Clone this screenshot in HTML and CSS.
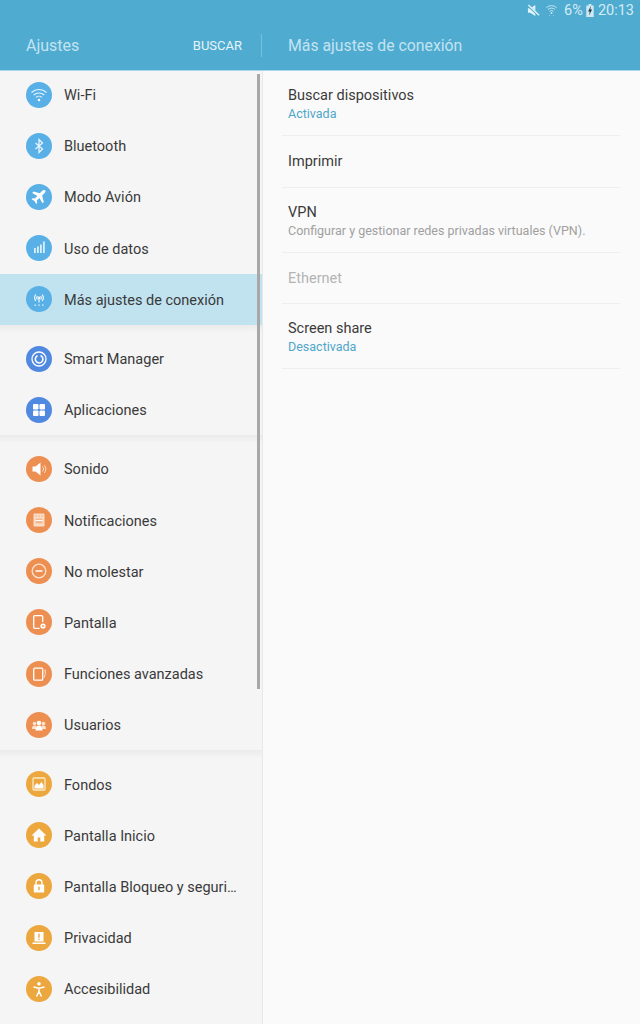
FILE: index.html
```html
<!DOCTYPE html>
<html>
<head>
    <title>Ajustes</title>
    <link rel="stylesheet" href="styles.css">
</head>
<body>
    <div class="screen">
        <header class="header">
            <div class="status-bar">
                <svg class="status-mute" viewBox="0 0 14 14"><path d="M1 4.500h2.500L9 1v12L3.500 9.500H1z" fill="#e4f3f9"/><path d="M1 1.500l12 11" stroke="#4fabd0" stroke-width="2.600"/><path d="M1.500 1l11.500 11" stroke="#e4f3f9" stroke-width="1.500"/></svg>
                <svg class="status-wifi" viewBox="0 0 14 14"><g fill="none" stroke="#cfe8f2" stroke-width="1"><path d="M1.500 4.500a8 8 0 0 1 11 0"/><path d="M3.200 6.500a5.500 5.500 0 0 1 7.600 0"/><path d="M5 8.400a3 3 0 0 1 4 0"/></g><circle cx="7" cy="10.200" r="1" fill="#cfe8f2"/><path d="M4.500 13h1M8.500 13h1" stroke="#9fd2e6" stroke-width="1"/></svg>
                <span class="status-text status-battery-pct">6%</span>
                <svg class="status-battery" viewBox="0 0 8 14"><path d="M2.500 0h3v1.500H8V14H0V1.500h2.500z" fill="#cfe8f2"/><path d="M5 2L2 8h1.800L3 12.500 6.200 6H4.300z" fill="#1d3a46"/></svg>
                <span class="status-text">20:13</span>
            </div>
            <div class="title-bar">
                <div class="title-left">
                    <span class="app-title">Ajustes</span>
                    <span class="search-btn">BUSCAR</span>
                </div>
                <div class="page-title">Más ajustes de conexión</div>
            </div>
        </header>

        <div class="panes">
            <nav class="sidebar">
                <div class="scrollbar"></div>

                <div class="menu-group first-group">
                    <div class="menu-item">
                        <span class="icon icon-blue"><svg viewBox="0 0 26 26"><g fill="none" stroke="#e8f5fc" stroke-width="1.100"><path d="M5.500 10.500a11 11 0 0 1 15 0"/><path d="M7.800 13a7.600 7.600 0 0 1 10.400 0"/><path d="M10 15.400a4.300 4.300 0 0 1 6 0"/></g><circle cx="13" cy="18" r="1.300" fill="#fff"/></svg></span>
                        <span class="menu-label">Wi-Fi</span>
                    </div>
                    <div class="menu-item">
                        <span class="icon icon-blue"><svg viewBox="0 0 26 26"><path d="M9.500 10l7 6-3.500 3.500v-13l3.500 3.500-7 6" fill="none" stroke="#e8f5fc" stroke-width="1.300"/></svg></span>
                        <span class="menu-label">Bluetooth</span>
                    </div>
                    <div class="menu-item">
                        <span class="icon icon-blue"><svg viewBox="0 0 26 26"><path d="M19.500 6.500c-1-1-2.300-.6-3.200.3l-2.500 2.500-6.300-1.700-1.300 1.300 5.200 3-2.600 2.700-2.300-.4-1 1 3 1.700 1.700 3 1-1-.4-2.300 2.700-2.600 3 5.200 1.300-1.300-1.700-6.300 2.500-2.500c.9-.9 1.300-2.200.4-3.100z" fill="#fff"/></svg></span>
                        <span class="menu-label">Modo Avión</span>
                    </div>
                    <div class="menu-item">
                        <span class="icon icon-blue"><svg viewBox="0 0 26 26"><path d="M8 13h1.800v5H8zM11 11.500h1.800V18H11zM14 9.500h1.800V18H14zM17 6.500h1.800V18H17z" fill="#d9effa"/></svg></span>
                        <span class="menu-label">Uso de datos</span>
                    </div>
                    <div class="menu-item active">
                        <span class="icon icon-blue"><svg viewBox="0 0 26 26"><g fill="none" stroke="#fff" stroke-width="1.100"><path d="M9.800 8.500a5.500 5.500 0 0 0 0 6.500"/><path d="M16.200 8.500a5.500 5.500 0 0 1 0 6.500"/><path d="M11.300 10a3 3 0 0 0 0 3.500"/><path d="M14.700 10a3 3 0 0 1 0 3.500"/><path d="M13 12v4.500"/></g><circle cx="13" cy="11.700" r="1.100" fill="#fff"/><path d="M8.500 18.500h1.500v1.300H8.500zM12.200 18.500h1.500v1.300h-1.500zM16 18.500h1.500v1.300H16z" fill="#e4f3f9"/></svg></span>
                        <span class="menu-label">Más ajustes de conexión</span>
                    </div>
                </div>
                <div class="group-sep"></div>

                <div class="menu-group">
                    <div class="menu-item">
                        <span class="icon icon-indigo"><svg viewBox="0 0 26 26"><g fill="none" stroke="#fff"><circle cx="13" cy="13" r="7" stroke-width="1.300"/><path d="M14.500 9.600a3.800 3.800 0 1 1-3 .1" stroke-width="1.600"/></g></svg></span>
                        <span class="menu-label">Smart Manager</span>
                    </div>
                    <div class="menu-item">
                        <span class="icon icon-indigo"><svg viewBox="0 0 26 26"><g fill="#fff"><rect x="7" y="7" width="5.500" height="5.500" rx="1"/><rect x="13.500" y="7" width="5.500" height="5.500" rx="1"/><rect x="7" y="13.500" width="5.500" height="5.500" rx="1"/><rect x="13.500" y="13.500" width="5.500" height="5.500" rx="1"/></g></svg></span>
                        <span class="menu-label">Aplicaciones</span>
                    </div>
                </div>
                <div class="group-sep"></div>

                <div class="menu-group">
                    <div class="menu-item">
                        <span class="icon icon-orange"><svg viewBox="0 0 26 26"><path d="M6.500 10.500h3L14.500 6.500v13l-5-4h-3z" fill="#fff"/><path d="M16.500 10.500a3.500 3.500 0 0 1 0 5M18.300 9a6 6 0 0 1 0 8" fill="none" stroke="#fbdcc6" stroke-width="1"/></svg></span>
                        <span class="menu-label">Sonido</span>
                    </div>
                    <div class="menu-item">
                        <span class="icon icon-orange"><svg viewBox="0 0 26 26"><rect x="7.500" y="6.500" width="11" height="13" rx="1" fill="#fbdcc6"/><path d="M9.500 9h1M12.500 9h1M15.500 9h1" stroke="#ee8f52" stroke-width="1"/><path d="M9.500 11.500h7v5h-7z" fill="#ee8f52" opacity=".45"/><path d="M9.500 13.500h7" stroke="#fff" stroke-width="1"/></svg></span>
                        <span class="menu-label">Notificaciones</span>
                    </div>
                    <div class="menu-item">
                        <span class="icon icon-orange"><svg viewBox="0 0 26 26"><circle cx="13" cy="13" r="6.800" fill="none" stroke="#fbe3d2" stroke-width="1.300"/><path d="M9.500 13h7" stroke="#fff" stroke-width="1.500"/></svg></span>
                        <span class="menu-label">No molestar</span>
                    </div>
                    <div class="menu-item">
                        <span class="icon icon-orange"><svg viewBox="0 0 26 26"><rect x="7.700" y="6.700" width="9" height="12.600" rx="1" fill="none" stroke="#fff" stroke-width="1.300"/><circle cx="17" cy="17" r="4" fill="#ee8f52"/><circle cx="17" cy="17" r="2.600" fill="#fff"/><circle cx="17" cy="17" r=".9" fill="#ee8f52"/></svg></span>
                        <span class="menu-label">Pantalla</span>
                    </div>
                    <div class="menu-item">
                        <span class="icon icon-orange"><svg viewBox="0 0 26 26"><rect x="7.700" y="7.200" width="9" height="12" rx="1" fill="none" stroke="#fff" stroke-width="1.300"/><path d="M19 8.500c.8 2.800.4 5.500-.8 8" fill="none" stroke="#fbdcc6" stroke-width="1.200"/></svg></span>
                        <span class="menu-label">Funciones avanzadas</span>
                    </div>
                    <div class="menu-item">
                        <span class="icon icon-orange"><svg viewBox="0 0 26 26"><g fill="#fbe3d2"><circle cx="8.500" cy="11.500" r="1.800"/><circle cx="17.500" cy="11.500" r="1.800"/><path d="M6 17c0-2.500 1-3.500 2.500-3.500s2 .5 2 1L10 17zM20 17c0-2.500-1-3.500-2.500-3.500s-2 .5-2 1l.5 2.500z"/></g><circle cx="13" cy="11" r="2.300" fill="#fff"/><path d="M9.500 18.500c0-3.500 1.500-5 3.500-5s3.500 1.500 3.500 5z" fill="#fff"/></svg></span>
                        <span class="menu-label">Usuarios</span>
                    </div>
                </div>
                <div class="group-sep"></div>

                <div class="menu-group">
                    <div class="menu-item">
                        <span class="icon icon-amber"><svg viewBox="0 0 26 26"><rect x="7" y="7" width="12" height="12" rx="1" fill="none" stroke="#fbe8c8" stroke-width="1.300"/><path d="M8.500 17.500v-3l2.500-2.500 2 2 2.500-3 2 3v3.500z" fill="#fff"/></svg></span>
                        <span class="menu-label">Fondos</span>
                    </div>
                    <div class="menu-item">
                        <span class="icon icon-amber"><svg viewBox="0 0 26 26"><path d="M13 6.500L5.500 13.500h2.300v6h3.900v-4h2.600v4h3.900v-6h2.300z" fill="#fff"/></svg></span>
                        <span class="menu-label">Pantalla Inicio</span>
                    </div>
                    <div class="menu-item">
                        <span class="icon icon-amber"><svg viewBox="0 0 26 26"><path d="M10 12V9.800a3 3 0 0 1 6 0V12" fill="none" stroke="#fff" stroke-width="1.400"/><rect x="7.800" y="11.500" width="10.400" height="8" rx="1" fill="#fff"/><rect x="12.300" y="13.800" width="1.400" height="3.400" fill="#eca83e"/></svg></span>
                        <span class="menu-label">Pantalla Bloqueo y seguri…</span>
                    </div>
                    <div class="menu-item">
                        <span class="icon icon-amber"><svg viewBox="0 0 26 26"><path d="M8.500 7h9v9.500h-9z" fill="#fff"/><path d="M6.500 17.500h13V19h-13z" fill="#fff"/><path d="M12.300 8.800h1.400v4h-1.400zM12.300 13.800h1.400v1.300h-1.400z" fill="#eca83e"/></svg></span>
                        <span class="menu-label">Privacidad</span>
                    </div>
                    <div class="menu-item">
                        <span class="icon icon-amber"><svg viewBox="0 0 26 26"><circle cx="13" cy="7.800" r="1.800" fill="#fff"/><path d="M7.500 11l5.500 1.200 5.500-1.200M13 12v3.500M13 15.500l-2.500 5M13 15.500l2.500 5" fill="none" stroke="#fff" stroke-width="1.500"/></svg></span>
                        <span class="menu-label">Accesibilidad</span>
                    </div>
                </div>
            </nav>

            <main class="content">
                <div class="setting tall">
                    <div class="setting-title">Buscar dispositivos</div>
                    <div class="setting-sub on">Activada</div>
                </div>
                <div class="setting">
                    <div class="setting-title">Imprimir</div>
                </div>
                <div class="setting tall">
                    <div class="setting-title">VPN</div>
                    <div class="setting-sub">Configurar y gestionar redes privadas virtuales (VPN).</div>
                </div>
                <div class="setting">
                    <div class="setting-title disabled">Ethernet</div>
                </div>
                <div class="setting tall">
                    <div class="setting-title">Screen share</div>
                    <div class="setting-sub on">Desactivada</div>
                </div>
            </main>
        </div>
    </div>
</body>
</html>
```

FILE: styles.css
```css
html, body {
    margin: 0;
    padding: 0;
}
body {
    font-family: Roboto, "Liberation Sans", sans-serif;
    background-color: #fafafa;
}
.screen {
    width: 640px;
    height: 1024px;
    display: flex;
    flex-direction: column;
    overflow: hidden;
}
.header {
    height: 71px;
    flex-shrink: 0;
    background-color: #4fabd0;
    border-bottom: 1px solid #a9d6e8;
    box-sizing: border-box;
}
.status-bar {
    height: 20px;
    display: flex;
    align-items: center;
    justify-content: flex-end;
    padding-right: 6px;
    color: #d5ecf5;
}
.status-text {
    font-size: 14.5px;
}
.status-mute {
    width: 13px;
    height: 13px;
    margin-right: 5px;
}
.status-wifi {
    width: 13px;
    height: 14px;
    margin-right: 6px;
}
.status-battery-pct {
    margin-right: 3px;
}
.status-battery {
    width: 8px;
    height: 13px;
    margin-right: 4px;
}
.title-bar {
    height: 50px;
    display: flex;
    align-items: center;
}
.title-left {
    width: 262px;
    height: 23px;
    box-sizing: border-box;
    padding: 0 19px 0 26px;
    display: flex;
    align-items: center;
    justify-content: space-between;
    border-right: 1px solid #78bfdb;
}
.app-title {
    font-size: 16px;
    color: #c4e3f0;
}
.search-btn {
    font-size: 13px;
    color: #e6f4f9;
}
.page-title {
    margin-left: 26px;
    font-size: 15.8px;
    color: #c4e3f0;
}
.panes {
    flex: 1;
    display: flex;
    min-height: 0;
}
.sidebar {
    position: relative;
    width: 262px;
    flex-shrink: 0;
    background-color: #f5f5f5;
    border-right: 1px solid #e8e8e8;
}
.scrollbar {
    position: absolute;
    top: 3px;
    left: 257px;
    width: 3px;
    height: 615px;
    background-color: #a8a8a8;
    z-index: 1;
}
/* first row runs slightly under the header */
.first-group {
    margin-top: -2px;
}
.menu-item {
    height: 51.2px;
    display: flex;
    align-items: center;
    padding-left: 25.5px;
}
.menu-item.active {
    background-color: #c1e3f0;
}
.group-sep {
    height: 8px;
    background: linear-gradient(#ebebeb, #f5f5f5);
}
.icon {
    width: 26px;
    height: 26px;
    flex-shrink: 0;
    border-radius: 50%;
    margin-right: 12.5px;
}
.icon svg {
    display: block;
    width: 26px;
    height: 26px;
}
.icon-blue { background-color: #58b0e6; }
.icon-indigo { background-color: #5089e0; }
.icon-orange { background-color: #ee8f52; }
.icon-amber { background-color: #eca83e; }
.menu-label {
    padding-top: 2px;
    font-size: 14.5px;
    color: #3a3a3a;
    white-space: nowrap;
}
.content {
    flex: 1;
    padding: 0 20px 0 19px;
    background-color: #fafafa;
}
.setting {
    height: 51.5px;
    padding: 2px 6px 0;
    display: flex;
    flex-direction: column;
    justify-content: center;
    border-bottom: 1px solid #eeeeee;
    box-sizing: border-box;
}
.setting.tall {
    height: 65px;
}
.setting-title {
    font-size: 14.5px;
    line-height: 20px;
    color: #3a3a3a;
}
.setting-title.disabled {
    color: #b4b4b4;
}
.setting-sub {
    font-size: 12.5px;
    line-height: 16px;
    color: #a0a0a0;
}
.setting-sub.on {
    color: #4fa6c9;
}
```
